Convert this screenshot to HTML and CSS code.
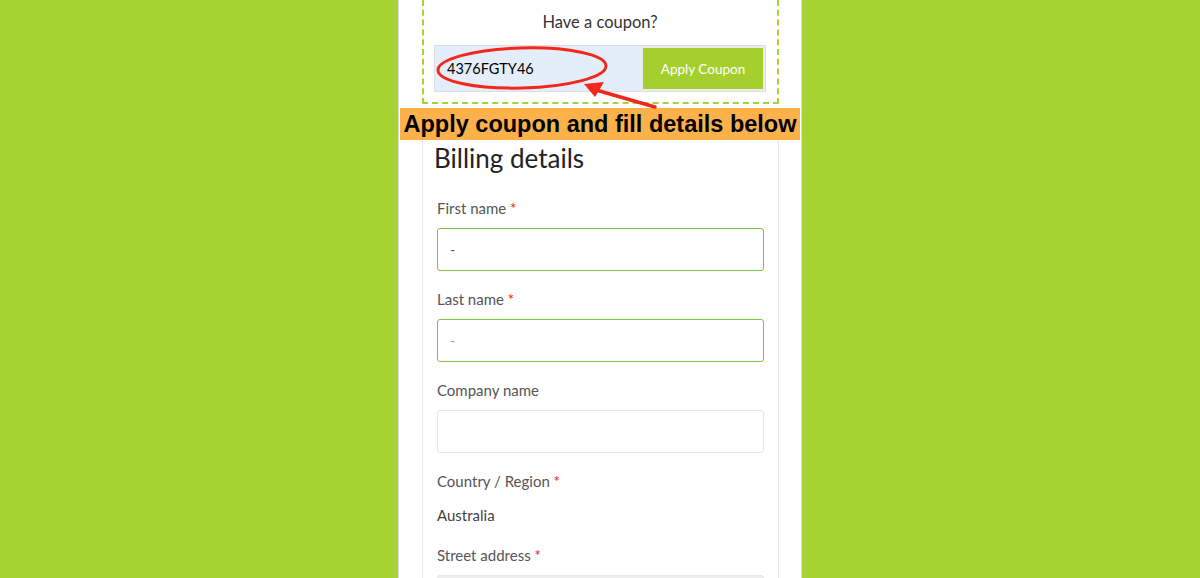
FILE: index.html
```html
<!DOCTYPE html>
<html lang="en">
<head>
    <meta charset="UTF-8">
    <meta name="viewport" content="width=device-width, initial-scale=1.0">
    <title>Checkout</title>
    <link rel="stylesheet" href="styles.css">
</head>
<body>
    <div class="page">
        <div class="coupon-box">
            <p class="coupon-title">Have a coupon?</p>
            <form class="coupon-row">
                <input class="coupon-input" type="text" name="coupon" value="4376FGTY46">
                <button class="coupon-btn" type="button">Apply Coupon</button>
            </form>
        </div>

        <div class="banner">Apply coupon and fill details below</div>

        <div class="billing">
            <h2 class="billing-title">Billing details</h2>

            <label class="field-label" for="first_name">First name <span class="req">*</span></label>
            <input class="field active" type="text" id="first_name" value="-">

            <label class="field-label" for="last_name">Last name <span class="req">*</span></label>
            <input class="field active" type="text" id="last_name" placeholder="-">

            <label class="field-label" for="company">Company name</label>
            <input class="field" type="text" id="company">

            <label class="field-label">Country / Region <span class="req">*</span></label>
            <p class="country">Australia</p>

            <label class="field-label street" for="street">Street address <span class="req">*</span></label>
            <input class="field filled" type="text" id="street">
        </div>
    </div>

    <!-- red annotation drawn over the coupon field -->
    <svg class="annotation" width="1200" height="578" viewBox="0 0 1200 578">
        <ellipse cx="522" cy="68" rx="84" ry="20" transform="rotate(-1.5 522 68)" fill="none" stroke="#f3271b" stroke-width="3"/>
        <line x1="655" y1="107" x2="596" y2="90" stroke="#f3271b" stroke-width="3.5" stroke-linecap="round"/>
        <polygon points="584,84 604,82 595,97" fill="#f3271b"/>
    </svg>
</body>
</html>
```

FILE: styles.css
```css
body {
    font-family: Lato, "Open Sans", sans-serif;
    margin: 0;
    background-color: #a6d232;
    height: 578px;
    overflow: hidden;
}
.page {
    width: 402px;
    margin: 0 auto;
    background: white;
    border-left: 1px solid #dcdcdc;
    border-right: 1px solid #dcdcdc;
    min-height: 578px;
}
.coupon-box {
    margin: 0 22px 0 23px;
    padding: 10px 11px 10px 10px;
    border: 2px dashed #a6d232;
    border-top: none;
    height: 82px;
    box-sizing: content-box;
}
.coupon-title {
    margin: 0 0 11px 0;
    text-align: center;
    font-size: 16.5px;
    line-height: 24px;
    color: #333;
}
.coupon-row {
    display: flex;
    height: 47px;
    border: 1px solid #dedede;
    box-sizing: border-box;
}
.coupon-input {
    flex: 1;
    min-width: 0;
    border: none;
    background: #e4eefa;
    font-family: Lato, sans-serif;
    font-size: 14.5px;
    color: #000;
    padding: 0 12px;
    outline: none;
}
.coupon-btn {
    width: 124px;
    background: #a5cf2f;
    color: white;
    border: 2px solid #ebebeb;
    font-family: Lato, sans-serif;
    font-size: 13.5px;
    padding: 0;
}
.banner {
    margin: 4px 1px 0 1px;
    height: 32px;
    background: #fdb14b;
    font-family: "Liberation Sans", Arial, sans-serif;
    font-weight: bold;
    font-size: 23.5px;
    line-height: 32px;
    text-align: center;
    color: #000;
    white-space: nowrap;
}
.billing {
    margin: 0 22px 0 23px;
    padding: 3px 14px 0 14px;
    border-left: 1px solid #e6e6e6;
    border-right: 1px solid #e6e6e6;
    display: flex;
    flex-direction: column;
}
.billing-title {
    margin: 0 0 25px -3px;
    font-size: 26px;
    line-height: 30px;
    font-weight: normal;
    color: #222;
}
.field-label {
    font-size: 15px;
    line-height: 20px;
    color: #555;
    margin-bottom: 10px;
}
.req {
    color: #e8141b;
}
.field {
    height: 43px;
    box-sizing: border-box;
    border: 1px solid #e6e6e6;
    border-radius: 3px;
    padding: 0 12px;
    margin: 0 0 18px 0;
    font-family: Lato, sans-serif;
    font-size: 14px;
    color: #555;
    outline: none;
}
.field.active {
    border-color: #7cc243;
}
.field.filled {
    background: #eeeeee;
}
.field::placeholder {
    color: #999;
}
.country {
    margin: 4px 0 20px 0;
    font-size: 15px;
    line-height: 20px;
    color: #444;
}
.annotation {
    position: absolute;
    top: 0;
    left: 0;
    pointer-events: none;
}
```
